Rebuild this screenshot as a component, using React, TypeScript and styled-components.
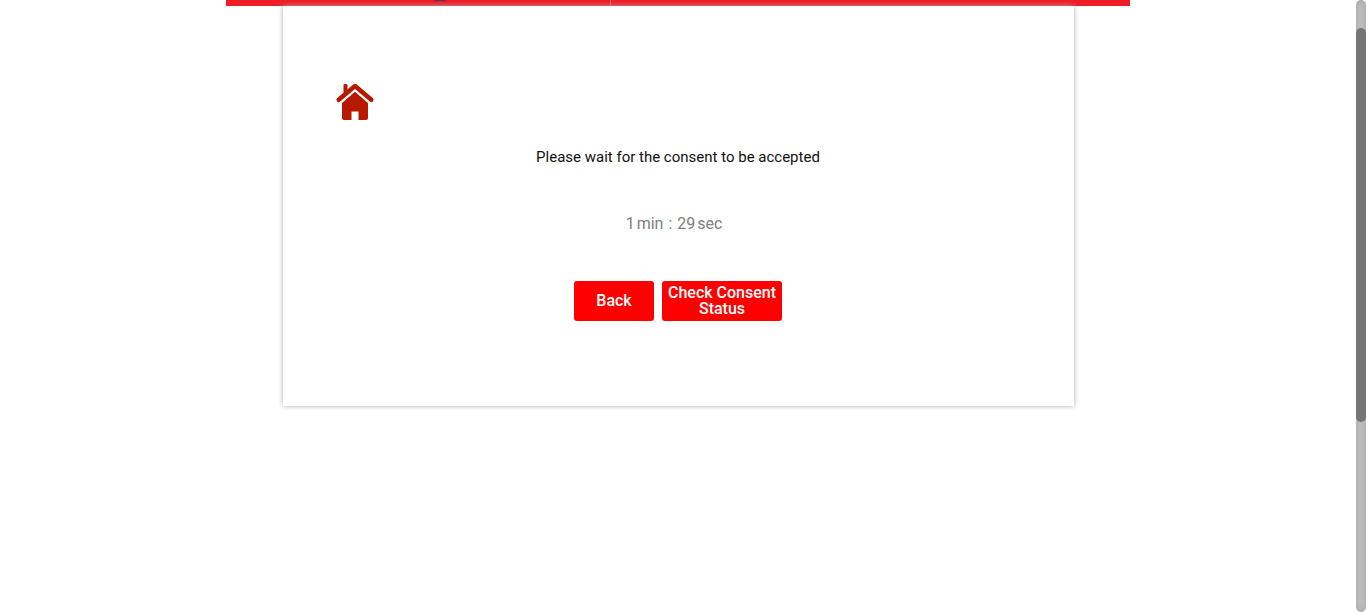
import React from 'react';
import styled, { createGlobalStyle } from 'styled-components';

const GlobalStyle = createGlobalStyle`
  *, *::before, *::after { box-sizing: border-box; }
  body {
    margin: 0;
    background: #fff;
    font-family: Roboto, "Liberation Sans", sans-serif;
    font-size: 15px;
    color: #111;
  }
`;

const Shell = styled.div`
  display: flex;
  height: 100vh;
`;

const Content = styled.div`
  flex: 1;
  display: flex;
  flex-direction: column;
  align-items: center;
  min-width: 0;
`;

const Banner = styled.header`
  width: calc(100% * 2 / 3);
  height: 6px;
  background: #ee1c25;
`;

const BannerArt = styled.svg`
  display: block;
  width: 100%;
  height: 6px;
`;

const Card = styled.main`
  position: relative;
  display: flex;
  flex-direction: column;
  align-items: center;
  width: calc(100% * 7 / 12);
  padding: 75px 51px 85px;
  background: #fff;
  box-shadow: 0 0 5px #aaa;
`;

const HomeLink = styled.a`
  align-self: flex-start;
  display: block;
  height: 42px;
  color: #b51a00;
`;

const Message = styled.p`
  margin: 24px 0 0;
  line-height: 20px;
`;

const Timer = styled.div`
  display: flex;
  gap: 2px;
  margin: 47px 8px 0 0;
  font-size: 16px;
  line-height: 20px;
  color: #808080;
`;

const Colon = styled.span`
  padding: 0 3px;
`;

const Actions = styled.div`
  display: flex;
  gap: 8px;
  margin-top: 47px;
`;

const ActionButton = styled.button<{ $wide?: boolean }>`
  width: ${({ $wide }) => ($wide ? 120 : 80)}px;
  height: 40px;
  padding: 0 4px;
  border: 0;
  border-radius: 3px;
  background: #f00;
  color: #fff;
  font: 500 16px/16px Roboto, "Liberation Sans", sans-serif;
  cursor: pointer;
`;

const ScrollTrack = styled.div`
  width: 10px;
  height: 100%;
  padding-top: 28px;
  border-radius: 5px;
  background: #bfbfbf;
  box-shadow: inset 0 0 6px rgba(0, 0, 0, 0.15);
`;

const ScrollThumb = styled.div`
  height: calc(100% * 394 / 584);
  border-radius: 5px;
  background: #757575;
`;

export default function App() {
  return (
    <>
      <GlobalStyle />
      <Shell>
        <Content>
          <Banner>
            <BannerArt viewBox="0 0 904 6" preserveAspectRatio="none" aria-hidden="true">
              <path d="M207 0h14q-3 1.2-7 1.2t-7-1.2z" fill="#5d3158" />
              <path d="M384 0h1v6h-1z" fill="#f4656b" />
            </BannerArt>
          </Banner>
          <Card>
            <HomeLink href="#" aria-label="Home">
              <svg width="42" height="42" viewBox="0 0 42 42" fill="none" aria-hidden="true">
                <path d="M9.500 14V4q0-1 1-1h2q1 0 1 1v7" fill="currentColor" />
                <path d="M4.700 18.800 21 5l16.300 13.800" stroke="currentColor" strokeWidth="4.500" strokeLinecap="round" strokeLinejoin="round" />
                <path d="M21 10.800 34 22V37q0 2-2 2h-7.500v-8.500h-7V39H10q-2 0-2-2V22z" fill="currentColor" />
              </svg>
            </HomeLink>
            <Message>Please wait for the consent to be accepted</Message>
            <Timer role="timer">
              <span>1</span>
              <span>min</span>
              <Colon>:</Colon>
              <span>29</span>
              <span>sec</span>
            </Timer>
            <Actions>
              <ActionButton type="button">Back</ActionButton>
              <ActionButton type="button" $wide>Check Consent Status</ActionButton>
            </Actions>
          </Card>
        </Content>
        <ScrollTrack aria-hidden="true">
          <ScrollThumb />
        </ScrollTrack>
      </Shell>
    </>
  );
}
